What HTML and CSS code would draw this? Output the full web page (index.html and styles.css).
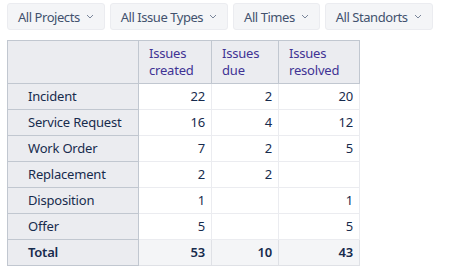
FILE: index.html
```html
<!DOCTYPE html>
<html>
<head>
<meta charset="utf-8">
<link rel="stylesheet" href="styles.css">
</head>
<body>
<div class="page">
  <div class="filters">
    <button class="filter">All Projects <svg class="chev" viewBox="0 0 8 5" width="8" height="5"><path d="M1 1l3 3 3-3" fill="none" stroke="currentColor" stroke-width="1"/></svg></button>
    <button class="filter">All Issue Types <svg class="chev" viewBox="0 0 8 5" width="8" height="5"><path d="M1 1l3 3 3-3" fill="none" stroke="currentColor" stroke-width="1"/></svg></button>
    <button class="filter">All Times <svg class="chev" viewBox="0 0 8 5" width="8" height="5"><path d="M1 1l3 3 3-3" fill="none" stroke="currentColor" stroke-width="1"/></svg></button>
    <button class="filter">All Standorts <svg class="chev" viewBox="0 0 8 5" width="8" height="5"><path d="M1 1l3 3 3-3" fill="none" stroke="currentColor" stroke-width="1"/></svg></button>
  </div>
  <table class="report">
    <colgroup>
      <col class="c-label"><col class="c-created"><col class="c-due"><col class="c-resolved">
    </colgroup>
    <thead>
      <tr>
        <th class="corner"></th>
        <th class="colhead"><span class="hl">Issues</span><span class="hl">created</span></th>
        <th class="colhead"><span class="hl">Issues</span><span class="hl">due</span></th>
        <th class="colhead"><span class="hl">Issues</span><span class="hl">resolved</span></th>
      </tr>
    </thead>
    <tbody>
      <tr><th class="rowhead">Incident</th><td>22</td><td>2</td><td>20</td></tr>
      <tr><th class="rowhead">Service Request</th><td>16</td><td>4</td><td>12</td></tr>
      <tr><th class="rowhead">Work Order</th><td>7</td><td>2</td><td>5</td></tr>
      <tr><th class="rowhead">Replacement</th><td>2</td><td>2</td><td></td></tr>
      <tr><th class="rowhead">Disposition</th><td>1</td><td></td><td>1</td></tr>
      <tr><th class="rowhead">Offer</th><td>5</td><td></td><td>5</td></tr>
      <tr class="total"><th class="rowhead">Total</th><td>53</td><td>10</td><td>43</td></tr>
    </tbody>
  </table>
</div>
</body>
</html>
```
FILE: styles.css
```css
* { box-sizing: border-box; }
body {
  margin: 0;
  background: #ffffff;
  font-family: "Noto Sans", "Open Sans", sans-serif;
  font-size: 13px;
  color: #172b4d;
}
.page {
  padding: 3px 7px;
}
.filters {
  display: flex;
  gap: 5px;
  margin-bottom: 10px;
}
.filter {
  flex: none;
  display: flex;
  align-items: center;
  gap: 6px;
  height: 27px;
  padding: 0 10px;
  background: #f4f5f7;
  border: 1px solid #ebecf0;
  border-radius: 3px;
  font-family: inherit;
  font-size: 13px;
  letter-spacing: -0.45px;
  white-space: nowrap;
  color: #42526e;
  cursor: pointer;
}
.chev { color: #7a869a; margin-top: -1px; }
.report {
  border-collapse: collapse;
  table-layout: fixed;
  width: 352px;
  border: 1px solid #c1c7d0;
}
.c-label { width: 131px; }
.c-created { width: 73px; }
.c-due { width: 67px; }
.c-resolved { width: 81px; }
.report th, .report td {
  height: 26px;
  padding: 0 6px;
  font-weight: normal;
  line-height: 17px;
  letter-spacing: -0.2px;
}
.report thead th {
  height: 43px;
  background: #ebecf0;
  border: 1px solid #c1c7d0;
  text-align: left;
  vertical-align: top;
  padding: 4px 10px 0;
  color: #403294;
}
.hl { display: block; line-height: 17px; }
.rowhead {
  background: #ebecf0;
  border: 1px solid #c1c7d0;
  text-align: left;
  padding-left: 20px !important;
  color: #172b4d;
}
.report td {
  text-align: right;
  border: 1px solid #ebecf0;
  color: #172b4d;
}
.total td { background: #f4f5f7; font-weight: 600; border-color: #dfe1e6; }
.total .rowhead { font-weight: 600; }
```
